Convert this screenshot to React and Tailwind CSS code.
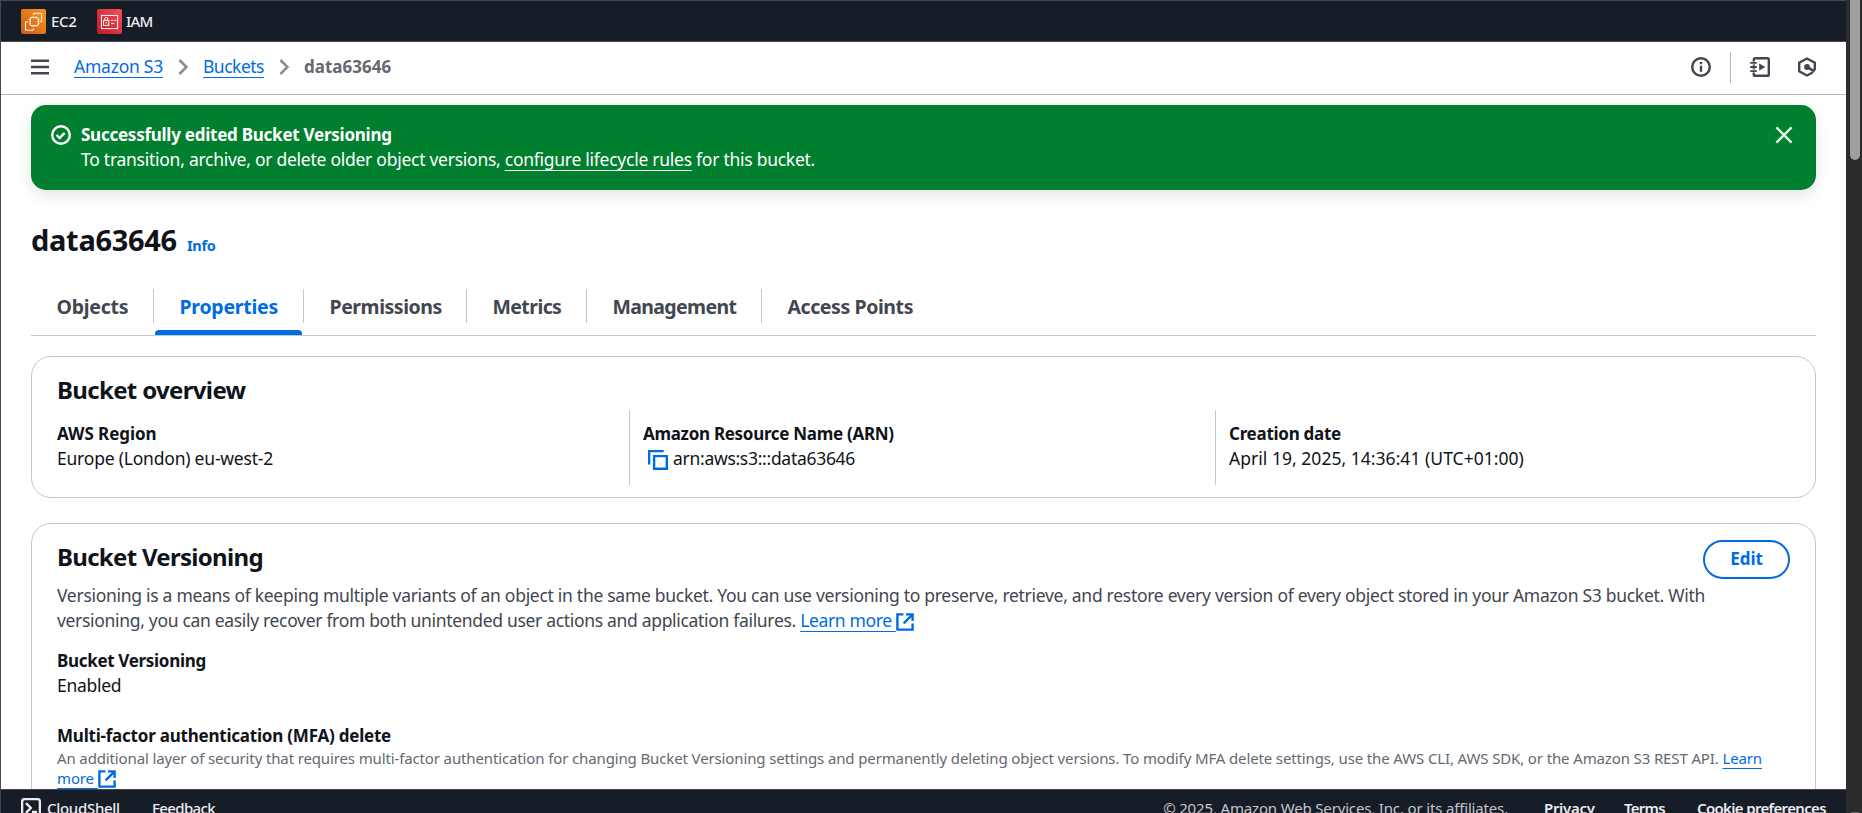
import React from "react";

function Icon({ children, className = "" }) {
  return (
    <svg
      viewBox="0 0 20 20"
      fill="none"
      stroke="currentColor"
      strokeWidth="2.4"
      className={`h-5 w-5 shrink-0 ${className}`}
    >
      {children}
    </svg>
  );
}

function External({ className = "" }) {
  return (
    <Icon className={`inline-block ${className}`}>
      <path d="M8.4 2.4H2.4v15.2h15.2v-6M11 2.4h6.6V9M8.6 11.4l8.8-8.8" />
    </Icon>
  );
}

function Chevron() {
  return (
    <Icon className="mx-[10px] text-[#8c8c94]">
      <path d="M6.4 3l7 7-7 7" strokeWidth="2.6" />
    </Icon>
  );
}

function Ec2Logo() {
  return (
    <svg viewBox="0 0 25 25" fill="none" className="h-[25px] w-[25px]">
      <defs>
        <linearGradient id="ec2" x1="0" y1="1" x2="1" y2="0">
          <stop offset="0" stopColor="#cf5a17" />
          <stop offset="1" stopColor="#f7981f" />
        </linearGradient>
      </defs>
      <rect width="25" height="25" rx="2" fill="url(#ec2)" />
      <g stroke="#fff" strokeWidth="0.95">
        <rect x="9.2" y="8.6" width="8" height="8" rx="0.5" />
        <path d="M11.2 8.6V7.2M13.2 8.6V7.2M15.2 8.6V7.2M11.2 18v-1.4M13.2 18v-1.4M15.2 18v-1.4M9.2 10.6H7.8M9.2 12.6H7.8M9.2 14.6H7.8M18.6 10.6h-1.4M18.6 12.6h-1.4M18.6 14.6h-1.4" strokeWidth="0.7" />
        <path d="M12.3 5.8V4.4h8.4v8.2h-1.6M7 12.9H4.5v8.3h7.8v-1.8" />
      </g>
    </svg>
  );
}

function IamLogo() {
  return (
    <svg viewBox="0 0 25 25" fill="none" className="h-[25px] w-[25px]">
      <defs>
        <linearGradient id="iam" x1="0" y1="1" x2="1" y2="0">
          <stop offset="0" stopColor="#bd1a2d" />
          <stop offset="1" stopColor="#fb4d55" />
        </linearGradient>
      </defs>
      <rect width="25" height="25" rx="2" fill="url(#iam)" />
      <g stroke="#fff" strokeWidth="1">
        <rect x="4.4" y="6.4" width="16.2" height="13.2" />
        <rect x="6.6" y="11.4" width="5.2" height="5" />
        <path d="M7.6 11.4V10a1.6 1.6 0 0 1 3.2 0v1.4M9.2 13v1.6M14 11.4h2.2M17 11.4h2.2M14 14.6h3.2" />
      </g>
    </svg>
  );
}

const tabs = [
  { label: "Objects", box: "w-[123px] border-r", text: "tracking-[-0.25px]" },
  { label: "Properties", box: "w-[150px] border-r", text: "tracking-[-0.25px] text-[#006ce0]", active: true },
  { label: "Permissions", box: "w-[163px] border-r", text: "tracking-[-0.46px]" },
  { label: "Metrics", box: "w-[120px] border-r", text: "tracking-[-0.58px]" },
  { label: "Management", box: "w-[175px] border-r", text: "tracking-[-0.64px]" },
  { label: "Access Points", box: "", text: "tracking-[-0.42px]" },
];

function TopBar() {
  return (
    <nav className="flex h-[42px] shrink-0 items-center border-y border-[#424650] bg-[#161d26] pl-5 text-[15px] font-medium text-[#ebebf0]">
      <Ec2Logo />
      <span className="ml-[5px] w-[46px] tracking-[-0.33px]">EC2</span>
      <IamLogo />
      <span className="ml-[4px] tracking-[-0.8px]">IAM</span>
    </nav>
  );
}

function Header() {
  return (
    <header className="flex h-[53px] shrink-0 items-center border-b border-[#b4b4bb] pr-[29px] pb-[2px] pl-[29px] text-[#424650]">
      <Icon>
        <path d="M1 3.7h18M1 10h18M1 16.3h18" />
      </Icon>
      <div className="ml-6 flex items-center">
        <a className="pb-[2px] tracking-[-0.24px] text-[#006ce0] underline decoration-1 underline-offset-4">Amazon S3</a>
        <Chevron />
        <a className="pb-[2px] tracking-[-0.5px] text-[#006ce0] underline decoration-1 underline-offset-4">Buckets</a>
        <Chevron />
        <span className="pb-[2px] text-[17px] font-bold text-[#656871]">data63646</span>
      </div>
      <div className="ml-auto flex items-center">
        <Icon>
          <circle cx="10" cy="10" r="8.8" />
          <path d="M10 8.8v6M10 5v2.3" />
        </Icon>
        <div className="mr-[19px] ml-[19px] h-[31px] w-px bg-[#b4b4bb]" />
        <Icon>
          <path d="M3.8 4.6V2.6q0-1.4 1.4-1.4h12.2q1.4 0 1.4 1.4v14.8q0 1.4-1.4 1.4H5.2q-1.4 0-1.4-1.4v-2" />
          <path d="M3.8 7.4v1.4M3.8 11.2v1.4" />
          <path d="M.2 5.9h6.6M.2 10h6.6M.2 14.1h6.6" strokeWidth="1.9" />
          <path d="M9.2 6.6l6.2 3.4-6.2 3.4z" fill="currentColor" stroke="none" />
        </Icon>
        <Icon className="ml-[27px]">
          <path d="M17.8 13.2V5.7L10 1.5 2.2 5.7v8.6l7.8 4.2 6-3.2" />
          <circle cx="10" cy="10" r="2.9" fill="currentColor" stroke="none" />
          <path d="M10 10l7.6 4.4" strokeWidth="2.6" />
        </Icon>
      </div>
    </header>
  );
}

function Flash() {
  return (
    <section className="flex h-[85px] rounded-[15px] bg-[#00802f] pt-[17px] pr-[22px] pl-5 text-white shadow-[0_6px_14px_rgba(0,0,0,0.1)]">
      <Icon className="mt-[3px]">
        <circle cx="10" cy="10" r="8.8" />
        <path d="M5.6 10l3 3 5-5.2" />
      </Icon>
      <div className="ml-[10px] leading-[25px]">
        <p className="text-[17px] font-bold tracking-[-0.25px]">Successfully edited Bucket Versioning</p>
        <p className="tracking-[-0.264px]">
          To transition, archive, or delete older object versions,{" "}
          <a className="underline decoration-1 underline-offset-4">configure lifecycle rules</a> for this bucket.
        </p>
      </div>
      <Icon className="mt-[3px] ml-auto text-[#dff0e4]">
        <path d="M2.4 2.4l15.2 15.2M17.6 2.4L2.4 17.6" />
      </Icon>
    </section>
  );
}

function Tabs() {
  return (
    <div className="mt-[31px] flex h-[47px] border-b border-[#c6c6cd] text-[19.5px] leading-[25px] font-bold text-[#424650]">
      {tabs.map((tab) => (
        <div key={tab.label} className="flex flex-col">
          <div className={`flex h-[34px] items-center border-[#c6c6cd] pl-[25.5px] whitespace-nowrap ${tab.box}`}>
            <span className={tab.text}>{tab.label}</span>
          </div>
          {tab.active && <div className="mt-[7px] mr-[2px] ml-px h-[5px] shrink-0 rounded-t-[4px] bg-[#006ce0]" />}
        </div>
      ))}
    </div>
  );
}

function Overview() {
  return (
    <section className="mt-[20px] h-[142px] rounded-[20px] border border-[#c6c6cd] pt-[18px] pl-[25px]">
      <h2 className="text-[24px] leading-[30px] font-bold tracking-[-0.66px]">Bucket overview</h2>
      <div className="mt-[5px] flex h-[75px] leading-[25px]">
        <div className="w-[572px] pt-[11px]">
          <p className="text-[17px] font-bold tracking-[-0.05px]">AWS Region</p>
          <p className="tracking-[-0.21px]">Europe (London) eu-west-2</p>
        </div>
        <div className="w-[586px] border-l border-[#c6c6cd] pt-[11px] pl-[13px]">
          <p className="text-[17px] font-bold tracking-[-0.3px]">Amazon Resource Name (ARN)</p>
          <p className="flex items-center tracking-[-0.29px]">
            <Icon className="mt-[2px] mr-[5px] ml-[5px] text-[#006ce0]">
              <path d="M1.1 14.4V1.1h14.6M6.1 6.1h12.7v12.7H6.1z" />
            </Icon>
            arn:aws:s3:::data63646
          </p>
        </div>
        <div className="border-l border-[#c6c6cd] pt-[11px] pl-[13px]">
          <p className="text-[17px] font-bold tracking-[-0.28px]">Creation date</p>
          <p className="tracking-[0.03px]">April 19, 2025, 14:36:41 (UTC+01:00)</p>
        </div>
      </div>
    </section>
  );
}

function Versioning() {
  return (
    <section className="mt-[25px] h-[320px] shrink-0 rounded-t-[20px] border border-[#c6c6cd] px-[25px] pt-[16px]">
      <div className="flex h-[39px] items-start justify-between">
        <h2 className="mt-[2px] text-[24px] leading-[30px] font-bold tracking-[-0.7px]">Bucket Versioning</h2>
        <button className="h-[39px] w-[87px] rounded-full border-[2px] border-[#006ce0] pb-[2px] text-[17px] font-bold tracking-[-0.1px] text-[#006ce0]">
          Edit
        </button>
      </div>
      <p className="mt-[4px] leading-[25px] tracking-[-0.289px] text-[#424650]">
        Versioning is a means of keeping multiple variants of an object in the same bucket. You can use versioning to preserve, retrieve, and restore every version of every object stored in your Amazon S3 bucket. With
        <br />
        <span className="tracking-[-0.32px]">
          versioning, you can easily recover from both unintended user actions and application failures.{" "}
        </span>
        <a className="tracking-[-0.36px] text-[#006ce0]">
          <span className="underline decoration-1 underline-offset-4">Learn more&nbsp;</span>
          <External className="-ml-px align-[-5px]" />
        </a>
      </p>
      <p className="mt-[15px] text-[17px] leading-[25px] font-bold tracking-[-0.32px]">Bucket Versioning</p>
      <p className="leading-[25px] tracking-[-0.3px]">Enabled</p>
      <p className="mt-[25px] text-[17px] leading-[25px] font-bold tracking-[-0.22px]">Multi-factor authentication (MFA) delete</p>
      <p className="text-[15px] leading-5 tracking-[-0.13px] whitespace-nowrap text-[#656871]">
        An additional layer of security that requires multi-factor authentication for changing Bucket Versioning settings and permanently deleting object versions. To modify MFA delete settings, use the AWS CLI, AWS SDK, or the Amazon S3 REST API.{" "}
        <a className="text-[#006ce0]">
          <span className="underline decoration-1 underline-offset-4">Learn</span>
          <br />
          <span className="underline decoration-1 underline-offset-4">more&nbsp;</span>
          <External className="-my-2 -ml-px align-[3px]" />
        </a>
      </p>
    </section>
  );
}

function Footer() {
  return (
    <footer className="flex h-[24px] shrink-0 items-start overflow-hidden border-t border-[#424650] bg-[#161d26] pr-5 pl-[20px] text-[15px] leading-5 text-[#ebebf0]">
      <Icon className="mt-[8px]">
        <rect x="1.1" y="1.1" width="17.8" height="17.8" rx="2.5" />
        <path d="M5 5.2l4.8 4.8L5 14.8M11 14h5" />
      </Icon>
      <span className="mt-[8px] ml-[6px] w-[105px] font-medium tracking-[-0.3px]">CloudShell</span>
      <span className="mt-[8px] font-medium tracking-[-0.64px]">Feedback</span>
      <span className="mt-[8px] ml-auto tracking-[-0.16px] text-[#c6c6cd]">© 2025, Amazon Web Services, Inc. or its affiliates.</span>
      <span className="mt-[8px] ml-[36px] w-[80px] font-semibold tracking-[-0.31px]">Privacy</span>
      <span className="mt-[8px] w-[73px] font-semibold tracking-[-0.72px]">Terms</span>
      <span className="mt-[8px] w-[129px] font-semibold tracking-[-0.66px] whitespace-nowrap">Cookie preferences</span>
    </footer>
  );
}

export default function App() {
  return (
    <div className="flex h-[813px] w-[1862px] overflow-hidden bg-white font-['Noto_Sans',sans-serif] text-[17.5px] leading-[25px] text-[#0f141a]">
      <div className="flex w-[1846px] flex-col border-l border-[#424650]">
        <TopBar />
        <Header />
        <main className="min-h-0 flex-1 overflow-hidden pt-[10px] pr-[30px] pl-[30px]">
          <Flash />
          <div className="mt-[32px] flex h-[36px] items-baseline">
            <h1 className="text-[29px] leading-[36px] font-bold tracking-[-0.3px]">data63646</h1>
            <a className="ml-[10px] text-[14.5px] font-bold tracking-[-0.25px] text-[#006ce0]">Info</a>
          </div>
          <Tabs />
          <Overview />
          <Versioning />
        </main>
        <Footer />
      </div>
      <div className="flex w-4 flex-col items-center justify-between bg-[#2b2b2b] pl-[2px]">
        <div className="h-[160px] w-[10px] rounded-b-full bg-[#9f9f9f]" />
        <div className="h-px w-[8px] bg-[#6b6b6b]" />
      </div>
    </div>
  );
}
